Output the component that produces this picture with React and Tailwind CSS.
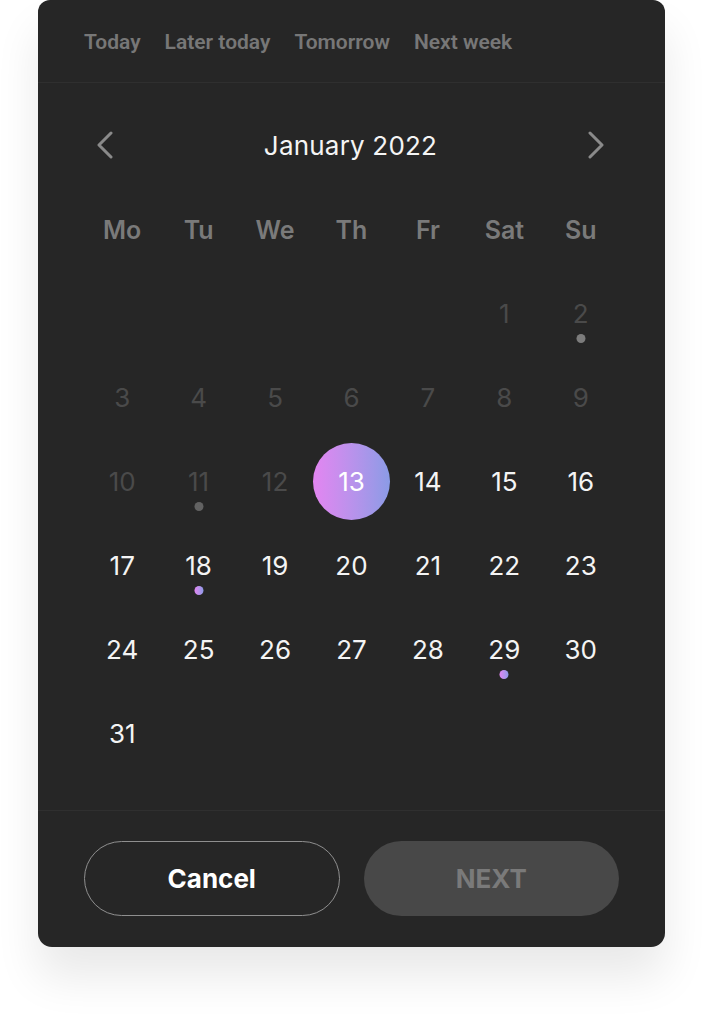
import React from "react";

const WEEKDAYS = ["Mo", "Tu", "We", "Th", "Fr", "Sat", "Su"];
const CHIPS = ["Today", "Later today", "Tomorrow", "Next week"];

// five blank cells: Jan 1st 2022 falls on a Saturday
const DAYS = [
  ...Array(5).fill(null),
  ...Array.from({ length: 31 }, (_, i) => i + 1),
];

const DOTS = { 2: "grey-light", 11: "grey", 18: "grad", 29: "grad" };

function Chevron({ dir }) {
  return (
    <svg width="18" height="28" viewBox="0 0 18 28" fill="none">
      <polyline
        points={dir === "left" ? "15,2 3,14 15,26" : "3,2 15,14 3,26"}
        stroke="#8a8a8a"
        strokeWidth="3"
        strokeLinecap="round"
        strokeLinejoin="round"
      />
    </svg>
  );
}

function Dot({ kind }) {
  if (!kind) return null;
  const cls =
    kind === "grad"
      ? "bg-gradient-to-r from-[#e085f2] to-[#8c9ae8]"
      : kind === "grey-light"
      ? "bg-[#7c7c7c]"
      : "bg-[#626262]";
  return <span className={`absolute left-1/2 top-[63px] -translate-x-1/2 w-[9px] h-[9px] rounded-full ${cls}`} />;
}

export default function App() {
  return (
    <div className="min-h-[1024px] bg-white pl-[38px] font-['Inter',sans-serif]">
      <div className="w-[627px] rounded-b-[14px] rounded-t-[12px] bg-[#262626] shadow-[0_30px_45px_rgba(0,0,0,0.09)]">
        {/* Quick picks */}
        <div className="h-[83px] border-b border-[#2f2f2f] flex items-center gap-[24px] pl-[46px] pt-[3px]">
          {CHIPS.map(c => (
            <span key={c} className="text-[21px] font-semibold text-[#777777] font-['Roboto',sans-serif]">
              {c}
            </span>
          ))}
        </div>

        {/* Month header */}
        <div className="flex items-center justify-between pl-[58px] pr-[60px] pt-[41px] h-[42px] box-content">
          <Chevron dir="left" />
          <span className="text-[26px] text-[#f4f4f4] tracking-[0.2px]">January 2022</span>
          <Chevron dir="right" />
        </div>

        {/* Calendar */}
        <div className="grid grid-cols-7 px-[46px] mt-[21px] pb-[35px]">
          {WEEKDAYS.map(w => (
            <div key={w} className="h-[84px] pt-[3px] flex items-center justify-center text-[25px] font-semibold text-[#7a7a7a]">
              {w}
            </div>
          ))}
          {DAYS.map((d, i) => (
            <div key={i} className="h-[84px] relative flex items-center justify-center">
              {d && (
                d === 13 ? (
                  <span className="w-[77px] h-[77px] rounded-full bg-gradient-to-r from-[#e385f1] to-[#8a9be6] flex items-center justify-center text-[26px] text-white">
                    13
                  </span>
                ) : (
                  <span className={`text-[26px] ${d < 13 ? "text-[#4a4a4a]" : "text-[#f4f4f4]"}`}>{d}</span>
                )
              )}
              {d && <Dot kind={DOTS[d]} />}
            </div>
          ))}
        </div>

        {/* Footer */}
        <div className="border-t border-[#2f2f2f] px-[46px] pt-[30px] pb-[31px] grid grid-cols-2 gap-[24px]">
          <button className="h-[75px] rounded-full border-[1.5px] border-[#8f8f8f] text-[26px] font-bold text-white">
            Cancel
          </button>
          <button className="h-[75px] rounded-full bg-[#484848] text-[26px] font-bold text-[#7a7a7a]">
            NEXT
          </button>
        </div>
      </div>
    </div>
  );
}
